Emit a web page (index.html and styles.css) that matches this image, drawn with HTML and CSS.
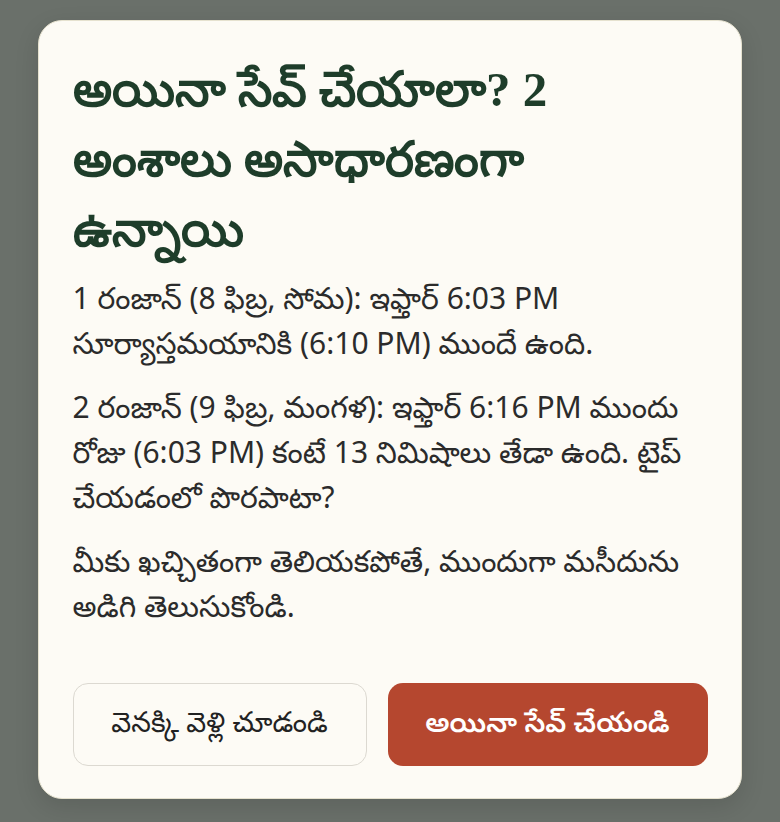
FILE: index.html
```html
<!DOCTYPE html>
<html lang="te">
<head>
<meta charset="utf-8">
<title>అయినా సేవ్ చేయాలా?</title>
<link rel="stylesheet" href="styles.css">
</head>
<body>
<div class="backdrop">
  <div class="card">
    <h1 class="title">అయినా సేవ్ చేయాలా? 2 అంశాలు అసాధారణంగా ఉన్నాయి</h1>
    <p class="msg">1 రంజాన్ (8 ఫిబ్ర, సోమ): ఇఫ్తార్ 6:03 PM సూర్యాస్తమయానికి (6:10 PM) ముందే ఉంది.</p>
    <p class="msg">2 రంజాన్ (9 ఫిబ్ర, మంగళ): ఇఫ్తార్ 6:16 PM ముందు రోజు (6:03 PM) కంటే 13 నిమిషాలు తేడా ఉంది. టైప్ చేయడంలో పొరపాటా?</p>
    <p class="msg">మీకు ఖచ్చితంగా తెలియకపోతే, ముందుగా మసీదును అడిగి తెలుసుకోండి.</p>
    <div class="actions">
      <button class="btn btn-back">వెనక్కి వెళ్లి చూడండి</button>
      <button class="btn btn-save">అయినా సేవ్ చేయండి</button>
    </div>
  </div>
</div>
</body>
</html>
```
FILE: styles.css
```css
* { box-sizing: border-box; }
html, body { margin: 0; padding: 0; }
body {
  width: 780px;
  height: 822px;
  background: #6a706a;
  font-family: "Noto Sans", "Noto Sans Telugu", sans-serif;
  overflow: hidden;
}
.backdrop {
  padding: 20px 38px;
}
.card {
  background: #fdfbf5;
  border: 1.5px solid #e6e2cf;
  border-radius: 24px;
  padding: 33.5px 33.5px 32px 33.5px;
  box-shadow: 0 8px 24px rgba(0, 0, 0, 0.12);
}
.title {
  margin: 0 0 10px 0;
  padding-right: 16px;
  font-family: Georgia, serif;
  font-weight: 700;
  font-size: 49px;
  line-height: 70px;
  color: #1e3d2a;
}
.msg {
  margin: 0 0 19px 0;
  font-size: 30px;
  line-height: 45px;
  color: #2b2b2b;
}
.actions {
  display: grid;
  grid-template-columns: 294fr 320fr;
  gap: 21px;
  margin-top: 55px;
}
.btn {
  height: 83px;
  border-radius: 15px;
  font-family: "Noto Sans", "Noto Sans Telugu", sans-serif;
  font-size: 28px;
  cursor: pointer;
}
.btn-back {
  background: #fdfbf5;
  border: 1.5px solid #dcd9d1;
  color: #222;
}
.btn-save {
  background: #b5472f;
  border: none;
  color: #fff;
  font-weight: 600;
}
```
